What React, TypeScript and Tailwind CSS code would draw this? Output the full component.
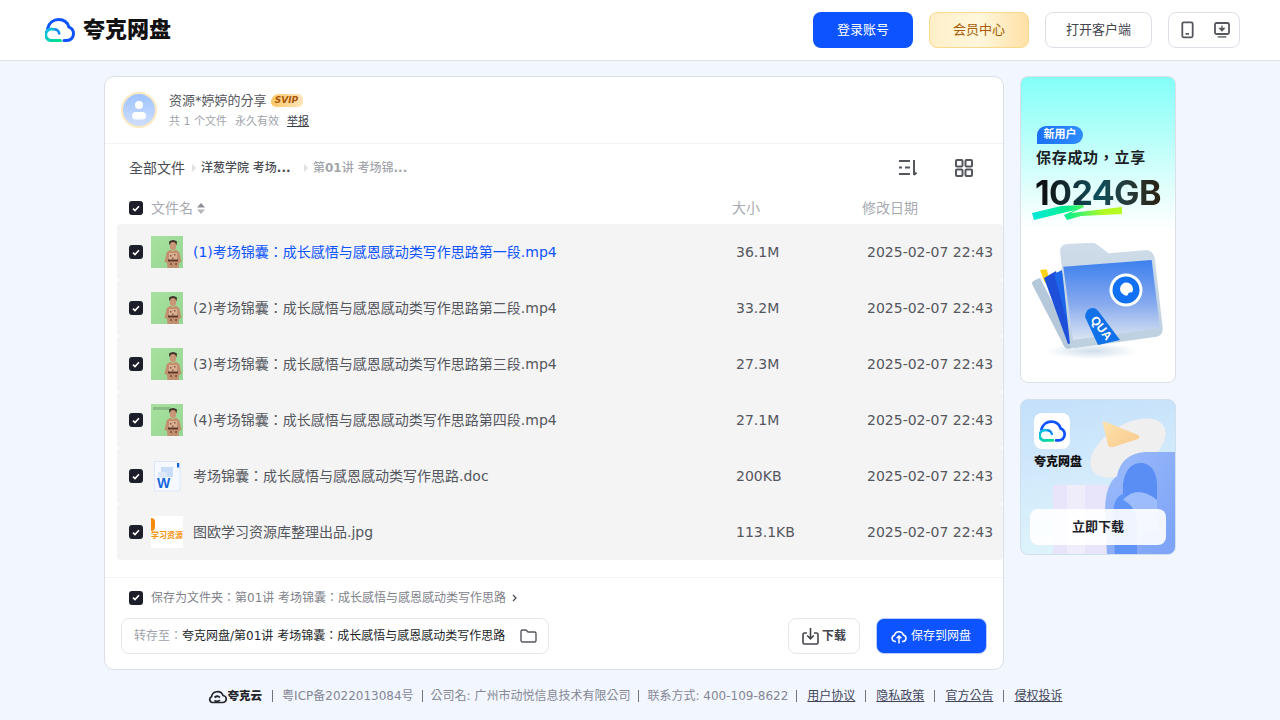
import React from "react";

const font = { fontFamily: '"DejaVu Sans","Noto Sans CJK TC",sans-serif' };

function Check() {
  return (
    <span className="flex h-[14px] w-[14px] shrink-0 items-center justify-center rounded-[3px] bg-[#1c1f29]">
      <svg width="8" height="7" viewBox="0 0 8 7" fill="none">
        <path d="M1 3.6 3 5.6 7 1.2" stroke="#fff" strokeWidth="1.6" />
      </svg>
    </span>
  );
}

function CloudLogo({ w = 30, h = 24, id = "lgA" }: { w?: number; h?: number; id?: string }) {
  return (
    <svg width={w} height={h} viewBox="0 0 30 24" fill="none" className="shrink-0">
      <defs>
        <linearGradient id={id} x1="0" y1="0" x2="1" y2="1">
          <stop offset="0" stopColor="#10b6f2" />
          <stop offset="1" stopColor="#00e08a" />
        </linearGradient>
      </defs>
      <path d="M2.6 10.5C4 5 8.4 1.6 13.6 1.6c5 0 9 3 10.4 7.6 2.9 1 4.5 3.6 4.5 6.600 0 3.800-3 6.700-6.600 6.700H19" stroke="#0d53ff" strokeWidth="3" strokeLinecap="round" />
      <path d="M9 11.200c2.600 0 4.600 1.600 5.200 4.200" stroke="#0d8cf5" strokeWidth="2.600" strokeLinecap="round" />
      <path d="M15.500 22.500H7.500a5.800 5.800 0 1 1 0-11.400" stroke={`url(#${id})`} strokeWidth="3" strokeLinecap="round" />
    </svg>
  );
}

function Thumb({ slide, id }: { slide?: boolean; id: string }) {
  return (
    <svg width="32" height="32" viewBox="0 0 32 32" className="shrink-0">
      <defs>
        <linearGradient id={id} x1="0" x2="1" y1="0" y2="1">
          <stop offset="0" stopColor="#a8e2a0" />
          <stop offset="1" stopColor="#98d592" />
        </linearGradient>
      </defs>
      <rect width="32" height="32" fill={`url(#${id})`} />
      {slide && <rect x="2" y="3" width="18" height="3" fill="#7fae7c" opacity="0.7" />}
      <path d="M18 5.500Q22 2.500 26 5.500L25.500 9H18.500z" fill="#3c3027" />
      <ellipse cx="22" cy="10" rx="3.200" ry="4" fill="#c99678" />
      <path d="M15 19c.5-3 2-4.500 4.500-5.200L22 15l2.500-1.200C27 14.500 28.500 16 29 19l1.500 7-2.500.8-.5 5.200H16.500l-.5-5.200-2.500-.8z" fill="#c0906f" />
      <path d="M18 17h8v7h-8z" fill="#d9b094" />
      <path d="M19 19h1.500v1.500H19zM23 18h1.500v1.500H23zM21 21.500h1.500V23H21zM19 27h2v2h-2zM24 27h2v2h-2z" fill="#8a5a43" />
      <path d="M17 23.500h10v2H17z" fill="#5c3b2e" />
    </svg>
  );
}

function WordIcon() {
  return (
    <svg width="32" height="32" viewBox="0 0 32 32" className="shrink-0">
      <path d="M3.500 1.500h22l3.500 3.500v26H3.500z" fill="#f6f9ff" stroke="#dbe7fa" />
      <rect x="26" y="3" width="2.200" height="4.500" fill="#1465d8" />
      <rect x="10" y="7" width="12" height="10" fill="#c9dcf8" />
      <rect x="7" y="12" width="9" height="6" fill="#dce8fb" />
      <text x="6" y="27.500" fontSize="14" fontWeight="800" fill="#1567de" fontFamily="Liberation Sans,sans-serif">W</text>
    </svg>
  );
}

function LogoThumb() {
  return (
    <div className="relative h-8 w-8 shrink-0 overflow-hidden bg-white">
      <div className="absolute left-0 top-[2px] h-[13px] w-[4px] rounded-r-full bg-[#f58a0b]" />
      <div className="absolute left-0 top-[15px] w-8 whitespace-nowrap text-[8px] font-bold leading-[10px] text-[#f5930f]">学习资源</div>
    </div>
  );
}

const rows = [
  { n: "(1)考场锦囊：成长感悟与感恩感动类写作思路第一段.mp4", s: "36.1M", t: <Thumb id="t1" />, a: true },
  { n: "(2)考场锦囊：成长感悟与感恩感动类写作思路第二段.mp4", s: "33.2M", t: <Thumb id="t2" /> },
  { n: "(3)考场锦囊：成长感悟与感恩感动类写作思路第三段.mp4", s: "27.3M", t: <Thumb id="t3" /> },
  { n: "(4)考场锦囊：成长感悟与感恩感动类写作思路第四段.mp4", s: "27.1M", t: <Thumb id="t4" slide /> },
  { n: "考场锦囊：成长感悟与感恩感动类写作思路.doc", s: "200KB", t: <WordIcon /> },
  { n: "图欧学习资源库整理出品.jpg", s: "113.1KB", t: <LogoThumb /> },
];

function Header() {
  return (
    <header className="flex h-[61px] items-center justify-between border-b border-[#dfe2ea] bg-white pl-[45px] pr-10">
      <div className="flex items-center gap-2">
        <CloudLogo />
        <span className="text-[22px] font-black leading-none text-[#111]">夸克网盘</span>
      </div>
      <div className="flex items-center gap-4 text-[13px]">
        <button className="h-9 w-[100px] rounded-lg bg-[#0d53ff] text-white">登录账号</button>
        <button className="h-9 w-[100px] rounded-lg border border-[#fbd98a] bg-gradient-to-r from-[#ffefc8] via-[#fff7dc] to-[#ffe0a6] text-[#a65c06]">会员中心</button>
        <button className="h-9 w-[107px] rounded-lg border border-[#dcdfe6] bg-white text-[#43454d]">打开客户端</button>
        <div className="flex h-9 w-[72px] items-center justify-between rounded-lg border border-[#dcdfe6] bg-white pl-3 pr-[9px]">
          <svg width="14" height="18" viewBox="0 0 14 18" fill="none">
            <rect x="1.300" y="1.300" width="10.400" height="15" rx="1.500" stroke="#55575e" strokeWidth="1.800" />
            <rect x="4.500" y="12" width="3.500" height="1.700" fill="#55575e" />
          </svg>
          <svg width="16" height="18" viewBox="0 0 16 18" fill="none" className="mt-[2px]">
            <rect x="1" y="1" width="14" height="11" rx="1.500" stroke="#55575e" strokeWidth="1.800" />
            <path d="M8 3.500v4M5.800 6.500 8 8.900l2.200-2.400z" stroke="#55575e" strokeWidth="1.300" fill="#55575e" />
            <rect x="3.500" y="14" width="9" height="1.800" rx=".8" fill="#7b7d84" />
          </svg>
        </div>
      </div>
    </header>
  );
}

function Tri() {
  return <span className="block h-0 w-0 border-y-[4px] border-l-[4px] border-y-transparent border-l-[#dfe1e6]" />;
}

function Main() {
  return (
    <section className="flex h-[594px] w-[900px] flex-col rounded-[10px] border border-[#dcdfe6] bg-white">
      <div className="flex h-[67px] shrink-0 items-center gap-3 border-b border-[#f2f3f5] pl-4">
        <div className="flex h-9 w-9 items-center justify-center rounded-full border-2 border-[#fde9bf] bg-gradient-to-b from-[#9dc3ff] to-[#cfdeff]">
          <svg width="18" height="22" viewBox="0 0 18 22">
            <circle cx="9" cy="6" r="4" fill="#fff" />
            <rect x="2" y="13" width="14" height="7.500" rx="3.700" fill="#fff" />
          </svg>
        </div>
        <div className="flex flex-col gap-[4px]">
          <div className="flex items-center gap-1 text-[13px] leading-[18px] text-[#55575e]">
            资源*婷婷的分享
            <span className="flex h-[13px] w-[32px] items-center justify-center rounded-[5px] rounded-tl-[8px] bg-gradient-to-r from-[#ffc766] to-[#ffe6b8] text-[9px] font-bold italic leading-none text-[#a8560a]">SVIP</span>
          </div>
          <div className="flex text-[11px] leading-[15px] text-[#a0a3ab]">
            <span className="mr-2">共 1 个文件</span>
            <span className="mr-2">永久有效</span>
            <span className="text-[#3c3f4a] underline">举报</span>
          </div>
        </div>
      </div>

      <div className="flex h-[48px] shrink-0 items-center justify-between pl-6 pr-[30px]">
        <div className="flex items-center">
          <span className="text-[14px] text-[#4b4d55]">全部文件</span>
          <span className="ml-[7px] mr-[5px]"><Tri /></span>
          <span className="w-[98px] whitespace-nowrap text-[12px] font-medium text-[#4b4d55]">洋葱学院 考场<b>...</b></span>
          <span className="ml-[5px] mr-[5px]"><Tri /></span>
          <span className="whitespace-nowrap text-[12px] font-medium text-[#a3a5ab]">第<b>01</b>讲 考场锦<b>...</b></span>
        </div>
        <div className="flex items-center gap-[38px]">
          <svg width="18" height="18" viewBox="0 0 18 18" fill="none" stroke="#55575e" strokeWidth="2">
            <path d="M0 2h11M0 8.500h3M6 8.500h5M0 15h11" />
            <path d="M15 1v15" />
            <path d="M15 16l2.500-2.500" />
          </svg>
          <svg width="18" height="18" viewBox="0 0 18 18" fill="none" stroke="#55575e" strokeWidth="2">
            <rect x="1" y="1" width="6.500" height="6.500" rx="1" />
            <rect x="10.500" y="1" width="6.500" height="6.500" rx="1" />
            <rect x="1" y="10.500" width="6.500" height="6.500" rx="1" />
            <rect x="10.500" y="10.500" width="6.500" height="6.500" rx="1" />
          </svg>
        </div>
      </div>

      <div className="flex h-[32px] shrink-0 items-center pl-6 text-[14px] text-[#a8abb2]">
        <Check />
        <span className="ml-2 flex w-[581px] items-center gap-1">
          文件名
          <svg width="8" height="11" viewBox="0 0 8 11">
            <path d="M4 0 8 4.500H0z" fill="#8d8f96" />
            <path d="M4 11 0 6.500h8z" fill="#b4b6bb" />
          </svg>
        </span>
        <span className="w-[130px]">大小</span>
        <span>修改日期</span>
      </div>

      <div className="ml-3 flex shrink-0 flex-col text-[14px] text-[#55575e]">
        {rows.map((r) => (
          <div key={r.n} className="flex h-[56px] items-center rounded-[4px] bg-[#f4f4f5] pl-3">
            <Check />
            <span className="ml-2">{r.t}</span>
            <span className={"ml-[10px] w-[543px] whitespace-nowrap " + (r.a ? "text-[#0d53ff]" : "")}>{r.n}</span>
            <span className="w-[131px]">{r.s}</span>
            <span className="whitespace-nowrap">2025-02-07 22:43</span>
          </div>
        ))}
      </div>

      <div className="mt-[17px] flex flex-1 flex-col border-t border-[#f2f3f5] px-4">
        <div className="flex h-[39px] shrink-0 items-center pl-2 text-[12px] text-[#7f828b]">
          <Check />
          <span className="ml-2">保存为文件夹：第01讲 考场锦囊：成长感悟与感恩感动类写作思路</span>
          <svg className="ml-[6px]" width="5" height="8" viewBox="0 0 5 8" fill="none">
            <path d="M1 1l3 3-3 3" stroke="#43454d" strokeWidth="1.200" />
          </svg>
        </div>
        <div className="mt-[1px] flex items-center justify-between">
          <div className="flex h-9 w-[428px] items-center rounded-lg border border-[#e4e6eb] pl-3 pr-[11px] text-[12px]">
            <span className="text-[#a0a3ab]">转存至：</span>
            <span className="flex-1 whitespace-nowrap text-[#1c1f29]">夸克网盘/第01讲 考场锦囊：成长感悟与感恩感动类写作思路</span>
            <svg width="17" height="14" viewBox="0 0 17 14" fill="none">
              <path d="M1 2.500A1.500 1.500 0 0 1 2.500 1H6l2 2h6.500A1.500 1.500 0 0 1 16 4.500v7a1.500 1.500 0 0 1-1.500 1.500h-12A1.500 1.500 0 0 1 1 11.500z" stroke="#55575e" strokeWidth="1.400" />
            </svg>
          </div>
          <div className="flex items-center gap-4 text-[12px]">
            <button className="flex h-9 w-[72px] items-center justify-center gap-[3px] rounded-lg border border-[#e4e6eb] bg-white font-semibold text-[#43454d]">
              <svg width="17" height="17" viewBox="0 0 17 17" fill="none" stroke="#43454d" strokeWidth="1.600">
                <path d="M5 5H2.500A1.500 1.500 0 0 0 1 6.500v8A1.500 1.500 0 0 0 2.500 16h12a1.500 1.500 0 0 0 1.500-1.500v-8A1.500 1.500 0 0 0 14.500 5H12" />
                <path d="M8.500 0v10M5.200 7.500l3.300 3.300 3.300-3.300" />
              </svg>
              下载
            </button>
            <button className="flex h-9 w-[111px] items-center justify-center gap-1 rounded-lg border border-[#b9cdfb] bg-[#0d53ff] pr-[1px] text-white">
              <svg width="16" height="15" viewBox="0 0 16 15" fill="none" stroke="#fff" strokeWidth="1.500" className="shrink-0">
                <path d="M5 12.500H4A3.200 3.200 0 0 1 3.500 6.200 4.600 4.600 0 0 1 12.400 6 3.300 3.300 0 0 1 12 12.500h-1" />
                <path d="M8 14.500V7M5.600 9.300 8 7l2.400 2.300" />
              </svg>
              保存到网盘
            </button>
          </div>
        </div>
      </div>
    </section>
  );
}

function AdOne() {
  return (
    <div className="flex h-[307px] flex-col overflow-hidden rounded-lg border border-[#dcdfe6] bg-[linear-gradient(180deg,#83fff8_0%,#d2fffb_30%,#ffffff_50%)]">
      <div className="ml-4 mt-[49px] flex h-[18px] w-[46px] shrink-0 items-center justify-center rounded-r-[9px] rounded-tl-[9px] bg-gradient-to-r from-[#1a70f5] to-[#2f8cff] text-[11px] font-bold text-white">新用户</div>
      <div className="ml-[15px] mt-[2px] text-[15px] font-bold leading-[24px] tracking-[0.7px] text-[#1b2024]">保存成功，立享</div>
      <div className="ml-[14px] mt-[7px] w-fit bg-gradient-to-r from-[#0a0a0a] via-[#0b4f5c] to-[#2a2212] bg-clip-text text-[34px] font-bold leading-[32px] tracking-[-0.6px] text-transparent" style={{ fontFamily: "Inter, sans-serif" }}>1024GB</div>
      <svg width="120" height="20" viewBox="0 0 120 20" className="ml-[10px] -mt-[8px] shrink-0">
        <defs>
          <linearGradient id="br" x1="0" x2="0.8">
            <stop offset="0" stopColor="#00e9dc" />
            <stop offset="0.5" stopColor="#0cf08c" />
            <stop offset="1" stopColor="#b5fa20" />
          </linearGradient>
        </defs>
        <path d="M1 12 30 5 52 4 53 6 40 12 91 6 91 13 50 15 36 19 33 14 44 9 3 19z" fill="url(#br)" />
      </svg>
      <svg width="135" height="120" viewBox="0 0 135 120" className="ml-[9px] mt-[19px] shrink-0">
        <defs>
          <linearGradient id="fld" x1="0" y1="0" x2="0" y2="1">
            <stop offset="0" stopColor="#3c80ee" />
            <stop offset="0.55" stopColor="#87aaee" />
            <stop offset="1" stopColor="#dbe5f2" />
          </linearGradient>
          <linearGradient id="fb" x1="0" y1="0" x2="0" y2="1">
            <stop offset="0" stopColor="#cfdce9" />
            <stop offset="1" stopColor="#bcd0e0" />
          </linearGradient>
          <radialGradient id="sh">
            <stop offset="0" stopColor="#cfdeea" />
            <stop offset="1" stopColor="#ffffff" />
          </radialGradient>
        </defs>
        <ellipse cx="62" cy="111" rx="46" ry="8" fill="url(#sh)" />
        <path d="M2 44 Q1 41 10 38 L44 104 Q44 108 38 109 Q34 108 32 102z" fill="#b4c8da" />
        <path d="M10 30 16.700 29.300 20 41.700 15 43z" fill="#ffd314" />
        <path d="M14 38 26 31 46 102 38 104z" fill="#1e4fd8" />
        <path d="M24 34 32 30 48 100 43 103z" fill="#1d66ea" />
        <path d="M30 10 Q31 4 38 4 L62 2.700 Q66 3 69 6 L78.300 13.300 L116.700 10 Q124 11 125 20 L132.700 88 Q133 95 126.700 96.700 L45 108 Q40 108 40 104z" fill="url(#fb)" />
        <path d="M33.300 26.700 L121.700 20 L130 88 L43 100z" fill="url(#fld)" />
        <circle cx="96" cy="50" r="16.500" fill="#fff" />
        <circle cx="96" cy="50" r="13.500" fill="#1171f2" />
        <path d="M90 49a6.500 6.500 0 1 1 12 3.500c-2-.5-3.500 0-4 2-1 2-3 1-4.500 0-2-1.300-3.500-3-3.500-5.500z" fill="#fff" />
        <path d="M55 76.700 Q56 68 63 68 Q66 68 69 72 L90 100 L68 105z" fill="#1171e8" />
        <text x="60" y="80" fontSize="12" fontWeight="800" fill="#fff" transform="rotate(52 60 80)" fontFamily="Liberation Sans,sans-serif">QUA</text>
      </svg>
    </div>
  );
}

function AdTwo() {
  return (
    <div className="relative h-[156px] overflow-hidden rounded-lg border border-[#cfe0ee] bg-[linear-gradient(170deg,#c3dffa_0%,#d2eafb_45%,#e2f7fc_100%)] pl-[13px] pt-[13px]">
      <svg width="156" height="156" viewBox="0 0 156 156" className="absolute left-0 top-0">
        <defs>
          <linearGradient id="cl" x1="0" y1="0" x2="1" y2="1">
            <stop offset="0" stopColor="#9dbcfb" />
            <stop offset="1" stopColor="#7ba1f6" />
          </linearGradient>
          <linearGradient id="tri" x1="0" y1="0" x2="1" y2="1">
            <stop offset="0" stopColor="#fde3b0" />
            <stop offset="1" stopColor="#f8c98a" />
          </linearGradient>
        </defs>
        <rect x="32" y="85" width="58" height="71" fill="#e8e5fa" />
        <rect x="46" y="85" width="18" height="71" fill="#f0edfb" />
        <ellipse cx="107" cy="48" rx="42" ry="23" transform="rotate(-32 107 48)" fill="#efefef" />
        <path d="M82 24 Q81 20 85 22 L117 35 Q120 37 117 39 L92 47 Q88 48 87 45z" fill="url(#tri)" />
        <path d="M156 52H124Q100 54 96 76 Q84 84 84 112 L86 156 H156z" fill="url(#cl)" />
        <path d="M102 84 Q105 62 122 63 Q135 66 136 84 L136 100 L102 100z" fill="#5a8ef4" />
        <path d="M92 112 Q94 94 104 94 Q114 96 116 112 L116 156 L94 156z" fill="#5f94f6" />
        <path d="M102 100 Q116 84 136 100 L136 130 L118 130 Q116 106 102 100z" fill="#9dbcfb" />
      </svg>
      <div className="relative flex h-9 w-9 items-center justify-center rounded-lg bg-white">
        <CloudLogo w={27} h={22} id="lgB" />
      </div>
      <div className="relative mt-[2px] text-[12px] font-black leading-[22px] text-[#111]">夸克网盘</div>
      <div className="absolute bottom-[9px] left-[9px] flex h-9 w-[136px] items-center justify-center rounded-lg bg-white/90 text-[13px] font-bold text-[#1c1f29]">立即下载</div>
    </div>
  );
}

function Footer() {
  const link = "text-[#43465a] underline";
  const sep = <span className="mx-2 h-3 w-px bg-[#6f7280]" />;
  const lsep = <span className="mx-[10px] h-3 w-px bg-[#6f7280]" />;
  return (
    <footer className="mt-[17px] flex items-center justify-center pr-[10px] text-[12px] leading-[18px] text-[#848794]">
      <span className="flex items-center gap-[1px] text-[11.500px] font-black text-[#23252b]">
        <svg width="19" height="15" viewBox="0 0 18 15" fill="none" stroke="#23252b" strokeWidth="1.700">
          <path d="M4 13.500A3 3 0 0 1 3 7.800 6 6 0 0 1 14.500 6.500 3.500 3.500 0 0 1 14 13.500z" />
          <path d="M6 8.500q3-2.500 5.500 0M6 11.500q3 2 5.500-.5" />
        </svg>
        夸克云
      </span>
      <span className="ml-[10px] mr-[9px] h-3 w-px bg-[#6f7280]" />
      <span>粤ICP备2022013084号</span>
      {sep}
      <span>公司名: 广州市动悦信息技术有限公司</span>
      {sep}
      <span>联系方式: 400-109-8622</span>
      <span className="ml-2 mr-[10px] h-3 w-px bg-[#6f7280]" />
      <span className={link}>用户协议</span>
      {lsep}
      <span className={link}>隐私政策</span>
      {lsep}
      <span className={link}>官方公告</span>
      {lsep}
      <span className={link}>侵权投诉</span>
    </footer>
  );
}

export default function App() {
  return (
    <div className="h-[720px] overflow-hidden bg-[#f2f6ff]" style={font}>
      <Header />
      <div className="mt-[15px] flex justify-center gap-4">
        <Main />
        <aside className="flex w-[156px] flex-col gap-4">
          <AdOne />
          <AdTwo />
        </aside>
      </div>
      <Footer />
    </div>
  );
}
